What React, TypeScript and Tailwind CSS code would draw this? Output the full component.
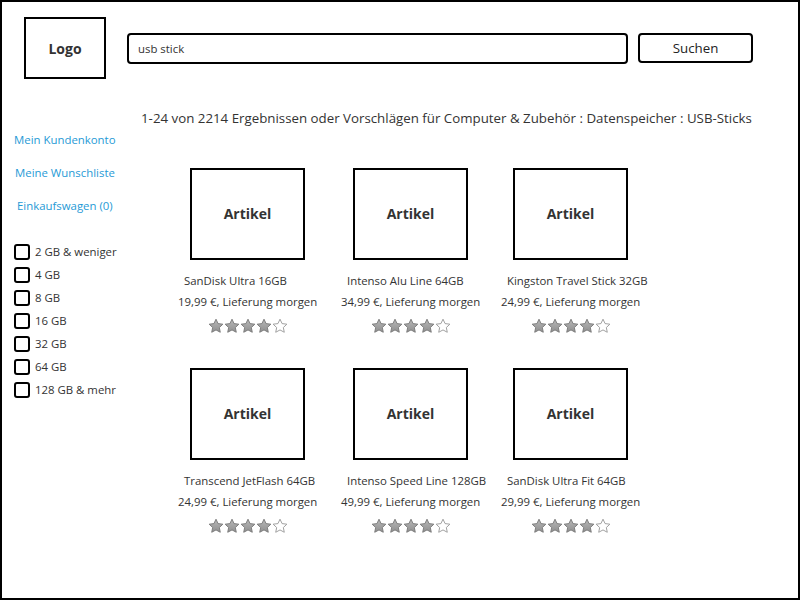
const PRODUCTS = [
  { title: "SanDisk Ultra 16GB", price: "19,99 €, Lieferung morgen" },
  { title: "Intenso Alu Line 64GB", price: "34,99 €, Lieferung morgen" },
  { title: "Kingston Travel Stick 32GB", price: "24,99 €, Lieferung morgen" },
  { title: "Transcend JetFlash 64GB", price: "24,99 €, Lieferung morgen" },
  { title: "Intenso Speed Line 128GB", price: "49,99 €, Lieferung morgen" },
  { title: "SanDisk Ultra Fit 64GB", price: "29,99 €, Lieferung morgen" },
]

const SIZES = ["2 GB & weniger", "4 GB", "8 GB", "16 GB", "32 GB", "64 GB", "128 GB & mehr"]

function Star({ filled }: { filled: boolean }) {
  return (
    <svg width="16" height="16" viewBox="0 0 24 24">
      <defs>
        <linearGradient id="starfill" x1="0" y1="0" x2="0" y2="1">
          <stop offset="0%" stopColor="#b8b8b8" />
          <stop offset="100%" stopColor="#8f8f8f" />
        </linearGradient>
      </defs>
      <path
        d="M12 1.8l3.1 6.6 7.2.9-5.3 5 1.4 7.1L12 17.9l-6.4 3.5 1.4-7.1-5.3-5 7.2-.9z"
        fill={filled ? "url(#starfill)" : "#fff"}
        stroke={filled ? "#7a7a7a" : "#9a9a9a"}
        strokeWidth="1.4"
        strokeLinejoin="round"
      />
    </svg>
  )
}

function Stars() {
  return (
    <div className="flex justify-center">
      {[0, 1, 2, 3, 4].map((i) => (
        <Star key={i} filled={i < 4} />
      ))}
    </div>
  )
}

function Card({ title, price }: { title: string; price: string }) {
  return (
    <div className="h-[200px]">
      <div className="ml-[12px] w-[115px] h-[92px] border-2 border-black flex items-center justify-center pb-[2px] text-[14px] font-bold text-[#333]">
        Artikel
      </div>
      <div className="mt-[13px] pl-[6px] text-[11.4px] leading-[16px] text-[#333] whitespace-nowrap">{title}</div>
      <div className="mt-[5px] w-[138px] text-center text-[11.4px] leading-[16px] text-[#333] whitespace-nowrap">{price}</div>
      <div className="mt-[8px] w-[140px]">
        <Stars />
      </div>
    </div>
  )
}

export default function App() {
  return (
    <div
      className="w-[800px] h-[600px] border-2 border-black bg-white overflow-hidden"
      style={{ fontFamily: "'Open Sans', 'Noto Sans', sans-serif" }}
    >
      {/* Header */}
      <div className="flex items-center pt-[15px] pl-[22px]">
        <div className="w-[82px] h-[62px] border-2 border-black flex items-center justify-center text-[14px] font-bold text-[#333]">
          Logo
        </div>
        <div className="ml-[21px] w-[501px] h-[31px] border-2 border-black rounded-[4px] flex items-center pl-[9px] pt-[1px] text-[11.4px] text-[#333]">
          usb stick
        </div>
        <div className="ml-[10px] w-[115px] h-[30px] border-2 border-black rounded-[4px] flex items-center justify-center pt-[2px] text-[13.3px] text-[#222]">
          Suchen
        </div>
      </div>

      <div className="flex">
        {/* Sidebar */}
        <div className="w-[176px] pt-[53px] pl-[12px]">
          <div className="flex flex-col gap-[17px] text-[11.4px] leading-[16px] text-[#1f9ad6]">
            <div>Mein Kundenkonto</div>
            <div className="pl-[1px]">Meine Wunschliste</div>
            <div className="pl-[3px]">Einkaufswagen (0)</div>
          </div>
          <div className="mt-[30px] flex flex-col gap-[7px]">
            {SIZES.map((s) => (
              <label key={s} className="flex items-center gap-[5px] text-[11.4px] leading-[16px] text-[#333]">
                <span className="w-[16px] h-[16px] border-2 border-black rounded-[3px] shrink-0" />
                {s}
              </label>
            ))}
          </div>
        </div>

        {/* Results */}
        <div className="flex-1">
          <div className="mt-[29px] -ml-[37px] text-[13.3px] leading-[20px] text-[#333] whitespace-nowrap">
            1-24 von 2214 Ergebnissen oder Vorschlägen für Computer &amp; Zubehör : Datenspeicher : USB-Sticks
          </div>
          <div className="mt-[40px] grid grid-cols-[163px_160px_160px]">
            {PRODUCTS.map((p) => (
              <Card key={p.title} title={p.title} price={p.price} />
            ))}
          </div>
        </div>
      </div>
    </div>
  )
}
